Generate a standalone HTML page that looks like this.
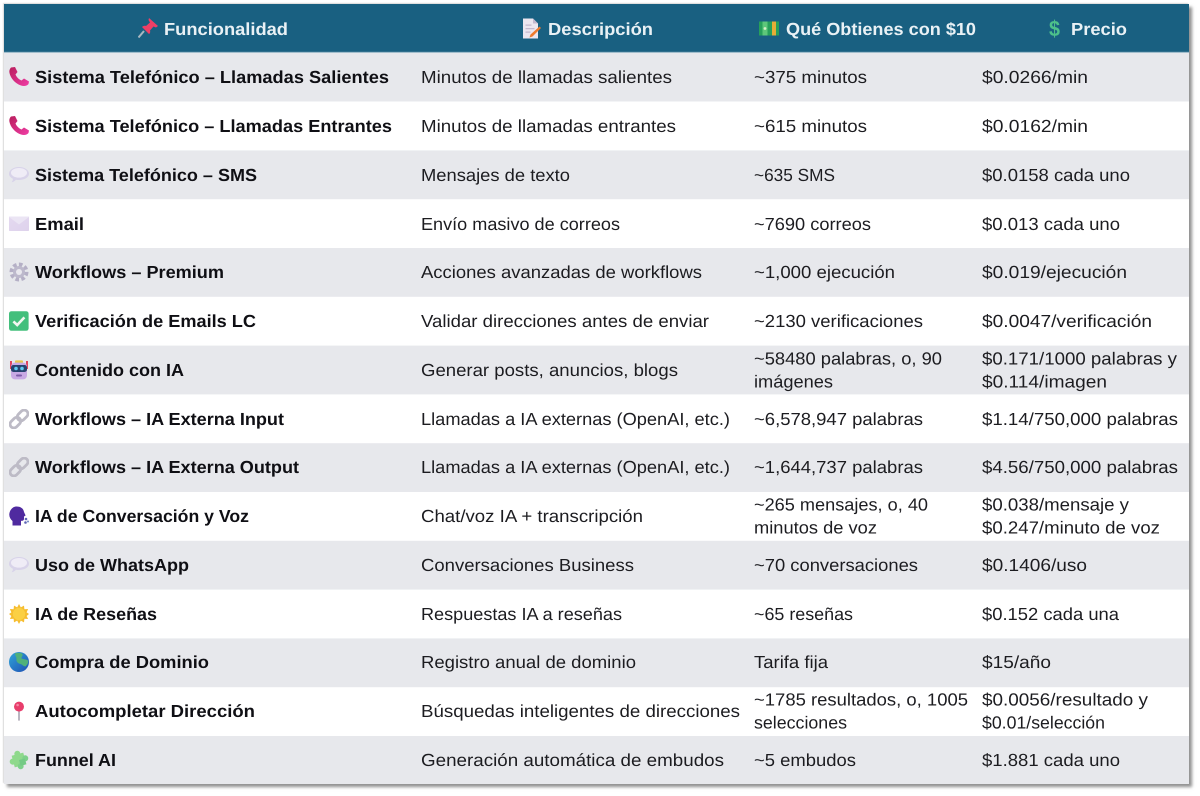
<!DOCTYPE html>
<html lang="es">
<head>
<meta charset="utf-8">
<title>Precios</title>
<style>
html,body{margin:0;padding:0;background:#fff;width:1200px;height:796px;overflow:hidden}
svg{display:block;position:absolute;left:0;top:0;filter:blur(.3px)}
#shadow{position:absolute;left:4px;top:4px;width:1185px;height:780px;box-shadow:3px 3px 3px rgba(70,70,70,.6),-1px -1px 1px rgba(0,0,0,.15)}
text{font-family:"Liberation Sans",sans-serif;font-size:17.5px;fill:#1c1c20;text-rendering:geometricPrecision}
.b{font-weight:700;fill:#0f0f14}
.h{font-weight:700;fill:#e9f1f5;font-size:17.5px}
</style>
</head>
<body>
<div id="shadow"></div>
<svg width="1200" height="796" viewBox="0 0 1200 796" xmlns="http://www.w3.org/2000/svg">
<defs>
<linearGradient id="pg" x1="0" y1="0" x2="1" y2="1"><stop offset="0" stop-color="#b81e5c"/><stop offset="1" stop-color="#f03da6"/></linearGradient>
<linearGradient id="gb" x1="0" y1="0" x2="1" y2="1"><stop offset="0" stop-color="#2fa6d8"/><stop offset="1" stop-color="#1f4fb4"/></linearGradient>
<linearGradient id="mg" x1="0" y1="0" x2="1" y2="1"><stop offset="0" stop-color="#e4d9f0"/><stop offset="1" stop-color="#ded2ec"/></linearGradient>
<symbol id="phone" viewBox="0 0 20 20"><path fill="url(#pg)" d="M2 .5L6 0L8.500 5L6.500 7.500C7.500 10 10 12.500 12.500 13.500L15 11.500L20 14.500L19.500 17C18 19 15 19.500 12 18.500C6 16.500 1.500 11 .5 6C0 4 .5 2 2 .5Z"/></symbol>
<symbol id="bubble" viewBox="0 0 20 20"><path fill="#d8d3e9" d="M10 2C15.500 2 20 5 20 8.800C20 12.500 15.500 15 10 15C8.900 15 7.900 14.900 6.900 14.700C5.800 16 4.400 17 2.600 17.300C3.500 16.200 3.900 15 3.900 13.700C1.500 12.600 0 10.900 0 8.800C0 5 4.500 2 10 2Z"/><ellipse cx="10" cy="7.800" rx="8" ry="4.800" fill="#efecf6"/></symbol>
<symbol id="mail" viewBox="0 0 20 20"><rect x="0" y="2.500" width="20" height="14.500" rx=".8" fill="url(#mg)"/><path d="M0 3L10 10.500L20 3V2.500H0Z" fill="#ebe5f4"/></symbol>
<symbol id="gear" viewBox="0 0 20 20"><circle cx="10" cy="10" r="7.200" fill="none" stroke="#b5b0c6" stroke-width="4.600" stroke-dasharray="3.400 2.200"/><circle cx="10" cy="10" r="6" fill="#bdb9cc"/><circle cx="10" cy="10" r="3" fill="#e9e8ee"/></symbol>
<symbol id="check" viewBox="0 0 20 20"><rect x="0" y=".2" width="19.600" height="19.600" rx="2.500" fill="#43bf7c"/><path d="M4.400 10.400L8.200 14L15.400 6.400" fill="none" stroke="#f2f6f0" stroke-width="2.600"/></symbol>
<symbol id="robot" viewBox="0 0 20 20"><rect x="1" y="1" width="2" height="8" fill="#e0455e"/><rect x="17" y="1" width="2" height="8" fill="#e0455e"/><rect x="6" y=".4" width="8" height="3" rx="1" fill="#e8c64e"/><rect x="2" y="2.600" width="16" height="16.800" rx="4" fill="#c8a9e4"/><rect x="2" y="5" width="16" height="7" rx="2.500" fill="#27436e"/><circle cx="7" cy="8.500" r="1.800" fill="#5fc9f0"/><circle cx="13" cy="8.500" r="1.800" fill="#5fc9f0"/><rect x="7" y="14.500" width="6" height="2" rx="1" fill="#7d5aa8"/></symbol>
<symbol id="link" viewBox="0 0 20 20"><g fill="none" stroke="#bdbbc6" stroke-width="2.800"><rect x="-6" y="-3.800" width="12" height="7.600" rx="3.800" transform="translate(6.400 13.600) rotate(-45)"/><rect x="-6" y="-3.800" width="12" height="7.600" rx="3.800" transform="translate(13.600 6.400) rotate(-45)"/></g></symbol>
<symbol id="head" viewBox="0 0 20 20"><path fill="#4f2a9f" d="M7 .5C11.500 .2 14.500 2.500 15 6L16.600 9.500L15 10.500V13C15 14.500 13.500 15 12 14.800V19.500H3.500V15C1.200 13 .1 10.500 .3 8C.8 4 3.500 .8 7 .5Z"/><circle cx="17" cy="13" r="1.300" fill="#5d63b5"/><circle cx="19" cy="15.500" r="1" fill="#6f8ac4"/><circle cx="16.500" cy="16.500" r="1.300" fill="#5d63b5"/></symbol>
<symbol id="sun" viewBox="0 0 20 20"><path fill="#f6bd30" d="M10 0l1.800 3.400L15 1.600l.4 3.700 3.700-.3-1.500 3.400L20 10l-2.400 2 1.500 3-3.700-.2L15 18.400l-3.200-1.800L10 20l-1.800-3.400L5 18.400l-.4-3.600-3.700.2 1.500-3L0 10l2.400-1.600L.9 5l3.700.3L5 1.600l3.200 1.800Z"/><circle cx="10" cy="10" r="6.200" fill="#fbd044"/></symbol>
<symbol id="globe" viewBox="0 0 20 20"><circle cx="10" cy="10" r="10" fill="url(#gb)"/><path fill="#4fb07a" d="M6 1.500C9 .5 12 .8 13.500 2C14 4 12 5 12.500 6.500C14.500 7.500 17 7 19 8.500C19.700 11 18 13 16.500 14.500C14.500 14.500 13.500 12.500 11.500 12C9 11.500 6.800 9.500 7.500 7C7.700 5 6 4 6 1.500Z"/></symbol>
<symbol id="pin" viewBox="0 0 20 20"><rect x="9.200" y="8" width="1.600" height="11.600" fill="#a9a4b2"/><circle cx="10" cy="5.600" r="5" fill="#e83e6c"/><circle cx="8.600" cy="4" r="1.300" fill="#f58aa6"/></symbol>
<symbol id="puzzle" viewBox="0 0 20 20"><g transform="rotate(-15 10 10)"><rect x="4" y="4" width="12" height="12" fill="#8fd98c"/><circle cx="10" cy="3.500" r="3" fill="#8fd98c"/><circle cx="16.500" cy="10" r="3" fill="#7ed08a"/><circle cx="10" cy="16.500" r="3" fill="#7ed08a"/><circle cx="3.500" cy="10" r="3" fill="#8fd98c"/><path fill="#74ca85" d="M10 10H16V16H10Z"/></g></symbol>
<symbol id="thumb" viewBox="0 0 20 20"><path d="M6 13L.5 19.500" stroke="#a8b6c0" stroke-width="2"/><path fill="#ef3f66" d="M11 0L20 8L18 9.500L15.500 8.500L12 12.500C12.500 14 12 15.500 11 16L4 9C5 8 6.500 7.500 8 8L12 4.500L10.500 2Z"/></symbol>
<symbol id="doc" viewBox="0 0 20 20"><path fill="#ece6ef" d="M2 0H12L17 5V20H2Z"/><path fill="#c4b8ce" d="M12 0L17 5H12ZM4.500 6h6v1.200h-6zM4.500 9.500h9v1.200h-9zM4.500 13h5v1.200h-5z"/><path fill="#ee7a2e" d="M18.500 8L20 9.500L11.500 18L8.500 19L9.500 16Z"/></symbol>
<symbol id="money" viewBox="0 0 20 20"><rect x="0" y="3" width="20" height="14" fill="#27a05a"/><rect x="3.500" y="3" width="5" height="14" fill="#5ec77a"/><rect x="13" y="3" width="4" height="14" fill="#e8ad36"/><circle cx="6" cy="10" r="1.400" fill="#d8f0c8"/></symbol>
</defs>

<!-- table background -->
<rect x="4" y="4" width="1185" height="780" fill="#fff"/>
<rect x="4" y="4" width="1185" height="48" fill="#196081"/>
<rect x="4" y="51.800" width="1185" height="1" fill="#7fa6ba"/>
<rect x="4" y="52.800" width="1185" height="48.700" fill="#e7e8ec"/>
<rect x="4" y="150.400" width="1185" height="48.800" fill="#e7e8ec"/>
<rect x="4" y="248" width="1185" height="48.800" fill="#e7e8ec"/>
<rect x="4" y="345.600" width="1185" height="48.800" fill="#e7e8ec"/>
<rect x="4" y="443.200" width="1185" height="48.800" fill="#e7e8ec"/>
<rect x="4" y="540.800" width="1185" height="48.800" fill="#e7e8ec"/>
<rect x="4" y="638.400" width="1185" height="48.800" fill="#e7e8ec"/>
<rect x="4" y="736" width="1185" height="48" fill="#e7e8ec"/>

<!-- header -->
<use href="#thumb" x="138" y="18" width="20" height="20"/>
<text class="h" x="164" y="35" textLength="124" lengthAdjust="spacingAndGlyphs">Funcionalidad</text>
<use href="#doc" x="521" y="18.500" width="20" height="20"/>
<text class="h" x="548" y="35" textLength="105" lengthAdjust="spacingAndGlyphs">Descripción</text>
<use href="#money" x="759" y="18.500" width="20" height="20"/>
<text class="h" x="786" y="35" textLength="190" lengthAdjust="spacingAndGlyphs">Qué Obtienes con $10</text>
<text x="1049" y="36" style="font-size:22px;font-weight:700;fill:#4dc08a" textLength="11" lengthAdjust="spacingAndGlyphs">$</text>
<text class="h" x="1071" y="35" textLength="56" lengthAdjust="spacingAndGlyphs">Precio</text>

<!-- icons -->
<use href="#phone" x="9" y="67" width="20" height="20"/>
<use href="#phone" x="9" y="116" width="20" height="20"/>
<use href="#bubble" x="9" y="165" width="20" height="20"/>
<use href="#mail" x="9" y="214" width="20" height="20"/>
<use href="#gear" x="9" y="262" width="20" height="20"/>
<use href="#check" x="9" y="311" width="20" height="20"/>
<use href="#robot" x="9" y="360" width="20" height="20"/>
<use href="#link" x="9" y="409" width="20" height="20"/>
<use href="#link" x="9" y="457" width="20" height="20"/>
<use href="#head" x="9" y="506" width="20" height="20"/>
<use href="#bubble" x="9" y="555" width="20" height="20"/>
<use href="#sun" x="9" y="604" width="20" height="20"/>
<use href="#globe" x="9" y="652" width="20" height="20"/>
<use href="#pin" x="9" y="701" width="20" height="20"/>
<use href="#puzzle" x="9" y="750" width="20" height="20"/>

<!-- column 1 -->
<text class="b" x="35" y="83" textLength="354" lengthAdjust="spacingAndGlyphs">Sistema Telefónico – Llamadas Salientes</text>
<text class="b" x="35" y="132" textLength="357" lengthAdjust="spacingAndGlyphs">Sistema Telefónico – Llamadas Entrantes</text>
<text class="b" x="35" y="181" textLength="222" lengthAdjust="spacingAndGlyphs">Sistema Telefónico – SMS</text>
<text class="b" x="35" y="230" textLength="49" lengthAdjust="spacingAndGlyphs">Email</text>
<text class="b" x="35" y="278" textLength="189" lengthAdjust="spacingAndGlyphs">Workflows – Premium</text>
<text class="b" x="35" y="327" textLength="221" lengthAdjust="spacingAndGlyphs">Verificación de Emails LC</text>
<text class="b" x="35" y="376" textLength="149" lengthAdjust="spacingAndGlyphs">Contenido con IA</text>
<text class="b" x="35" y="425" textLength="249" lengthAdjust="spacingAndGlyphs">Workflows – IA Externa Input</text>
<text class="b" x="35" y="473" textLength="264" lengthAdjust="spacingAndGlyphs">Workflows – IA Externa Output</text>
<text class="b" x="35" y="522" textLength="214" lengthAdjust="spacingAndGlyphs">IA de Conversación y Voz</text>
<text class="b" x="35" y="571" textLength="154" lengthAdjust="spacingAndGlyphs">Uso de WhatsApp</text>
<text class="b" x="35" y="620" textLength="122" lengthAdjust="spacingAndGlyphs">IA de Reseñas</text>
<text class="b" x="35" y="668" textLength="174" lengthAdjust="spacingAndGlyphs">Compra de Dominio</text>
<text class="b" x="35" y="717" textLength="220" lengthAdjust="spacingAndGlyphs">Autocompletar Dirección</text>
<text class="b" x="35" y="766" textLength="81" lengthAdjust="spacingAndGlyphs">Funnel AI</text>

<!-- column 2 -->
<text x="421" y="83" textLength="251" lengthAdjust="spacingAndGlyphs">Minutos de llamadas salientes</text>
<text x="421" y="132" textLength="255" lengthAdjust="spacingAndGlyphs">Minutos de llamadas entrantes</text>
<text x="421" y="181" textLength="149" lengthAdjust="spacingAndGlyphs">Mensajes de texto</text>
<text x="421" y="230" textLength="199" lengthAdjust="spacingAndGlyphs">Envío masivo de correos</text>
<text x="421" y="278" textLength="281" lengthAdjust="spacingAndGlyphs">Acciones avanzadas de workflows</text>
<text x="421" y="327" textLength="288" lengthAdjust="spacingAndGlyphs">Validar direcciones antes de enviar</text>
<text x="421" y="376" textLength="257" lengthAdjust="spacingAndGlyphs">Generar posts, anuncios, blogs</text>
<text x="421" y="425" textLength="309" lengthAdjust="spacingAndGlyphs">Llamadas a IA externas (OpenAI, etc.)</text>
<text x="421" y="473" textLength="309" lengthAdjust="spacingAndGlyphs">Llamadas a IA externas (OpenAI, etc.)</text>
<text x="421" y="522" textLength="222" lengthAdjust="spacingAndGlyphs">Chat/voz IA + transcripción</text>
<text x="421" y="571" textLength="213" lengthAdjust="spacingAndGlyphs">Conversaciones Business</text>
<text x="421" y="620" textLength="201" lengthAdjust="spacingAndGlyphs">Respuestas IA a reseñas</text>
<text x="421" y="668" textLength="215" lengthAdjust="spacingAndGlyphs">Registro anual de dominio</text>
<text x="421" y="717" textLength="319" lengthAdjust="spacingAndGlyphs">Búsquedas inteligentes de direcciones</text>
<text x="421" y="766" textLength="303" lengthAdjust="spacingAndGlyphs">Generación automática de embudos</text>

<!-- column 3 -->
<text x="754" y="83" textLength="113" lengthAdjust="spacingAndGlyphs">~375 minutos</text>
<text x="754" y="132" textLength="113" lengthAdjust="spacingAndGlyphs">~615 minutos</text>
<text x="754" y="181" textLength="81" lengthAdjust="spacingAndGlyphs">~635 SMS</text>
<text x="754" y="230" textLength="117" lengthAdjust="spacingAndGlyphs">~7690 correos</text>
<text x="754" y="278" textLength="141" lengthAdjust="spacingAndGlyphs">~1,000 ejecución</text>
<text x="754" y="327" textLength="169" lengthAdjust="spacingAndGlyphs">~2130 verificaciones</text>
<text x="754" y="364.500" textLength="188" lengthAdjust="spacingAndGlyphs">~58480 palabras, o, 90</text>
<text x="754" y="387.500" textLength="79" lengthAdjust="spacingAndGlyphs">imágenes</text>
<text x="754" y="425" textLength="169" lengthAdjust="spacingAndGlyphs">~6,578,947 palabras</text>
<text x="754" y="473" textLength="169" lengthAdjust="spacingAndGlyphs">~1,644,737 palabras</text>
<text x="754" y="510.500" textLength="174" lengthAdjust="spacingAndGlyphs">~265 mensajes, o, 40</text>
<text x="754" y="533.500" textLength="123" lengthAdjust="spacingAndGlyphs">minutos de voz</text>
<text x="754" y="571" textLength="164" lengthAdjust="spacingAndGlyphs">~70 conversaciones</text>
<text x="754" y="620" textLength="99" lengthAdjust="spacingAndGlyphs">~65 reseñas</text>
<text x="754" y="668" textLength="74" lengthAdjust="spacingAndGlyphs">Tarifa fija</text>
<text x="754" y="705.500" textLength="214" lengthAdjust="spacingAndGlyphs">~1785 resultados, o, 1005</text>
<text x="754" y="728.500" textLength="93" lengthAdjust="spacingAndGlyphs">selecciones</text>
<text x="754" y="766" textLength="102" lengthAdjust="spacingAndGlyphs">~5 embudos</text>

<!-- column 4 -->
<text x="982" y="83" textLength="106" lengthAdjust="spacingAndGlyphs">$0.0266/min</text>
<text x="982" y="132" textLength="106" lengthAdjust="spacingAndGlyphs">$0.0162/min</text>
<text x="982" y="181" textLength="148" lengthAdjust="spacingAndGlyphs">$0.0158 cada uno</text>
<text x="982" y="230" textLength="138" lengthAdjust="spacingAndGlyphs">$0.013 cada uno</text>
<text x="982" y="278" textLength="145" lengthAdjust="spacingAndGlyphs">$0.019/ejecución</text>
<text x="982" y="327" textLength="170" lengthAdjust="spacingAndGlyphs">$0.0047/verificación</text>
<text x="982" y="364.500" textLength="195" lengthAdjust="spacingAndGlyphs">$0.171/1000 palabras y</text>
<text x="982" y="387.500" textLength="125" lengthAdjust="spacingAndGlyphs">$0.114/imagen</text>
<text x="982" y="425" textLength="196" lengthAdjust="spacingAndGlyphs">$1.14/750,000 palabras</text>
<text x="982" y="473" textLength="196" lengthAdjust="spacingAndGlyphs">$4.56/750,000 palabras</text>
<text x="982" y="510.500" textLength="147" lengthAdjust="spacingAndGlyphs">$0.038/mensaje y</text>
<text x="982" y="533.500" textLength="178" lengthAdjust="spacingAndGlyphs">$0.247/minuto de voz</text>
<text x="982" y="571" textLength="105" lengthAdjust="spacingAndGlyphs">$0.1406/uso</text>
<text x="982" y="620" textLength="137" lengthAdjust="spacingAndGlyphs">$0.152 cada una</text>
<text x="982" y="668" textLength="69" lengthAdjust="spacingAndGlyphs">$15/año</text>
<text x="982" y="705.500" textLength="166" lengthAdjust="spacingAndGlyphs">$0.0056/resultado y</text>
<text x="982" y="728.500" textLength="123" lengthAdjust="spacingAndGlyphs">$0.01/selección</text>
<text x="982" y="766" textLength="138" lengthAdjust="spacingAndGlyphs">$1.881 cada uno</text>
</svg>
</body>
</html>
